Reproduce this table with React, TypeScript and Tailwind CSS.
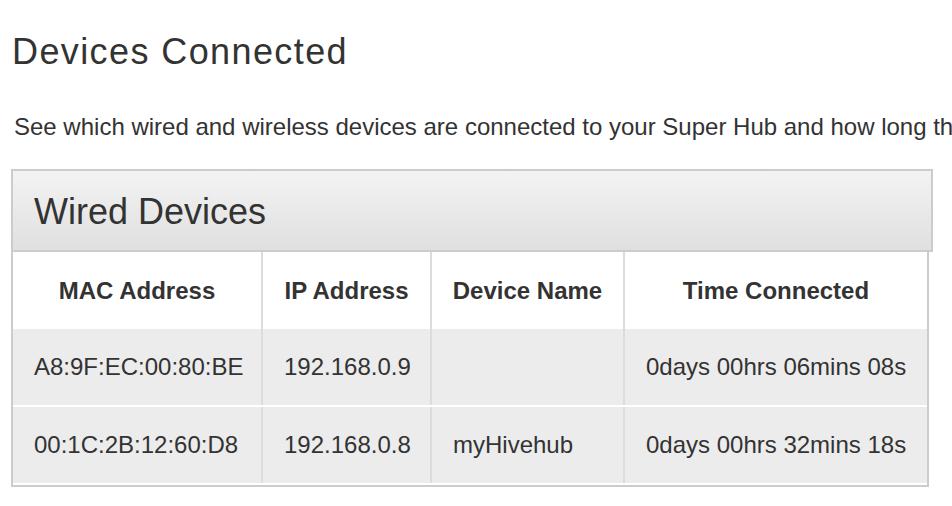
const columns = ['MAC Address', 'IP Address', 'Device Name', 'Time Connected'];

const devices = [
  { mac: 'A8:9F:EC:00:80:BE', ip: '192.168.0.9', name: '', time: '0days 00hrs 06mins 08s' },
  { mac: '00:1C:2B:12:60:D8', ip: '192.168.0.8', name: 'myHivehub', time: '0days 00hrs 32mins 18s' },
];

const gridCols = 'grid grid-cols-[250px_169px_193px_302px]';

const App = () => {
  return (
    <div
      className="min-h-screen w-[952px] h-[506px] overflow-hidden bg-white text-[#333]"
      style={{ fontFamily: '"Liberation Sans", Arial, sans-serif' }}
    >
      <h1 className="pl-[12px] pt-[31px] text-[36px] leading-[42px] tracking-[1.4px] font-normal">
        Devices Connected
      </h1>

      <p className="pl-[14px] pt-[40px] text-[24px] leading-[28px] whitespace-nowrap overflow-hidden">
        See which wired and wireless devices are connected to your Super Hub and how long they have been connected.
      </p>

      <section className="ml-[11px] mt-[28px]">
        <div className="w-[922px] h-[83px] border-2 border-[#cccccc] bg-gradient-to-b from-[#f3f3f3] to-[#e0e0e0] flex items-center pl-[21px]">
          <h2 className="pt-[2px] text-[36px] leading-[40px] font-normal">Wired Devices</h2>
        </div>

        <div className="w-[918px] border-x-2 border-b-2 border-[#cccccc]">
          <div className={`${gridCols} h-[77px] bg-white`}>
            {columns.map((col, i) => (
              <div
                key={col}
                className={`flex items-center justify-center text-[24px] font-bold ${
                  i < 3 ? 'border-r-2 border-[#dcdcdc]' : ''
                }`}
              >
                {col}
              </div>
            ))}
          </div>

          {devices.map((d) => (
            <div key={d.mac} className={`${gridCols} h-[78px] bg-[#ececec] border-b-2 border-white`}>
              {[d.mac, d.ip, d.name, d.time].map((val, i) => (
                <div
                  key={i}
                  className={`flex items-center pl-[21px] text-[24px] ${
                    i < 3 ? 'border-r-2 border-[#dcdcdc]' : ''
                  }`}
                >
                  {val}
                </div>
              ))}
            </div>
          ))}
        </div>
      </section>
    </div>
  );
};

export default App;
